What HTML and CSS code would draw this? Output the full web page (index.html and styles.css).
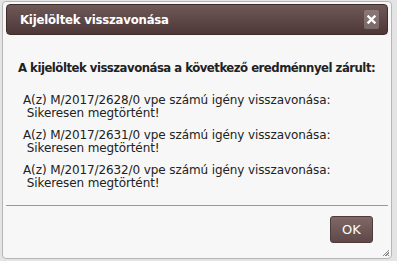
FILE: index.html
```html
<!DOCTYPE html>
<html lang="hu">
<head>
<meta charset="utf-8">
<title>Kijelöltek visszavonása</title>
<link rel="stylesheet" href="styles.css">
</head>
<body>
<div class="page-bg">
  <div class="dialog">
    <div class="titlebar">
      <span class="title">Kijelöltek visszavonása</span>
      <span class="close" aria-label="Bezárás">
        <svg width="9" height="9" viewBox="0 0 9 9"><path d="M1.5 1.5 L7.5 7.5 M7.5 1.5 L1.5 7.5" stroke="#fff" stroke-width="2.4" stroke-linecap="square"/></svg>
      </span>
    </div>
    <div class="content">
      <p class="heading">A kijelöltek visszavonása a következő eredménnyel zárult:</p>
      <div class="result">A(z) M/2017/2628/0 vpe számú igény visszavonása:<br>&nbsp;Sikeresen megtörtént!</div>
      <div class="result">A(z) M/2017/2631/0 vpe számú igény visszavonása:<br>&nbsp;Sikeresen megtörtént!</div>
      <div class="result">A(z) M/2017/2632/0 vpe számú igény visszavonása:<br>&nbsp;Sikeresen megtörtént!</div>
    </div>
    <div class="buttonpane">
      <button class="ok">OK</button>
    </div>
    <span class="resize"></span>
  </div>
</div>
</body>
</html>
```
FILE: styles.css
```css
html, body {
  margin: 0;
  padding: 0;
}
body {
  background: #e4e4e4;
  font-family: "DejaVu Sans", Verdana, sans-serif;
  width: 397px;
  height: 261px;
  overflow: hidden;
}
.page-bg {
  padding: 1px 0 0 2px;
}
.dialog {
  position: relative;
  width: 382px;
  height: 251px;
  background: #f7f7f7;
  border: 1px solid #b5b5b5;
  border-radius: 4px;
  padding: 2px 3px 3px 3px;
  display: flex;
  flex-direction: column;
}
.titlebar {
  height: 31px;
  flex: none;
  background: linear-gradient(#6e5958, #4d3837);
  border: 1px solid #3f2d2c;
  border-radius: 4px;
  box-sizing: border-box;
  display: flex;
  align-items: center;
  justify-content: space-between;
  padding: 0 8px 0 13px;
}
.title {
  color: #fff;
  font-family: "DejaVu Sans Condensed", "DejaVu Sans", sans-serif;
  font-size: 13px;
  font-weight: bold;
  letter-spacing: -0.2px;
}
.close {
  width: 15px;
  height: 19px;
  background: rgba(255,255,255,0.22);
  border-radius: 2px;
  display: flex;
  align-items: center;
  justify-content: center;
}
.content {
  flex: 1;
  padding: 0 12px 0 12px;
  color: #222;
  font-size: 12px;
}
.heading {
  margin: 25px 0 19px 0;
  font-family: "DejaVu Sans Condensed", "DejaVu Sans", sans-serif;
  font-weight: bold;
  font-size: 13px;
  letter-spacing: -0.5px;
  white-space: nowrap;
}
.result {
  line-height: 13px;
  margin: 0 0 9px 5px;
  letter-spacing: -0.1px;
}
.buttonpane {
  flex: none;
  border-top: 1px solid #9a9a9a;
  height: 50px;
  display: flex;
  justify-content: flex-end;
  align-items: flex-start;
  padding: 10px 15px 0 0;
  box-sizing: border-box;
}
.ok {
  width: 43px;
  height: 27px;
  background: linear-gradient(#7f6866, #5f4948);
  border: 1px solid #4e3b3a;
  border-radius: 3px;
  color: #fff;
  font-family: "DejaVu Sans", Verdana, sans-serif;
  font-size: 13px;
  padding: 0;
}
.resize {
  position: absolute;
  right: 2px;
  bottom: 2px;
  width: 7px;
  height: 7px;
  background: repeating-linear-gradient(135deg, transparent 0 1px, #888 1px 2px);
  clip-path: polygon(100% 0, 100% 100%, 0 100%);
}
```
